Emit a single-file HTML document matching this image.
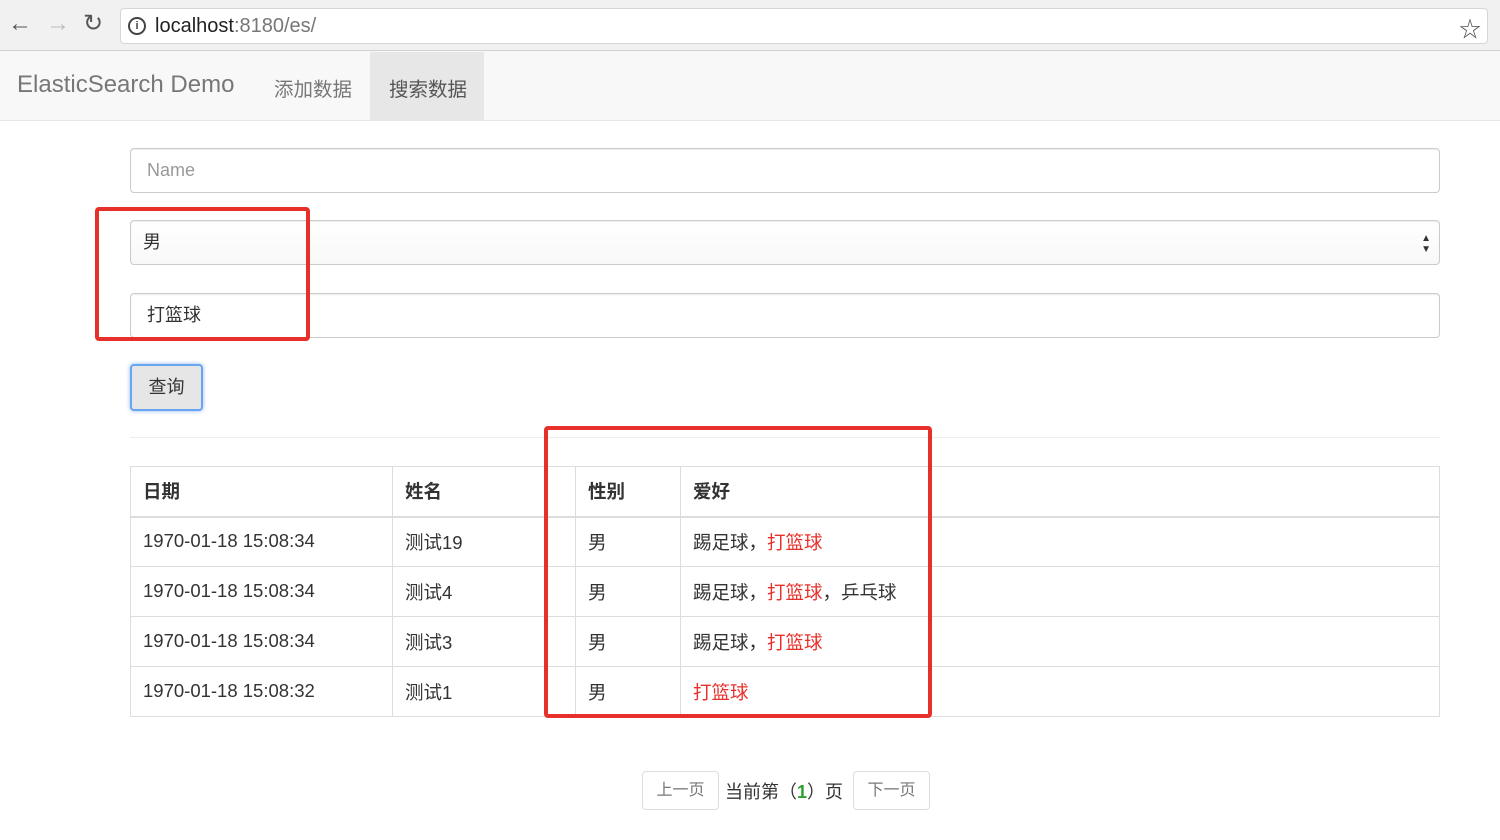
<!DOCTYPE html>
<html><head><meta charset="utf-8"><style>
*{box-sizing:border-box;margin:0;padding:0}
body{width:1500px;height:840px;overflow:hidden;background:#fff;font-family:"Liberation Sans","Noto Sans CJK SC",sans-serif;position:relative;color:#333}
.abs{position:absolute}
.chrome{left:0;top:0;width:1500px;height:51px;background:#f1f1f1;border-bottom:1px solid #d0d0d0}
.url{left:120px;top:8px;width:1368px;height:36px;background:#fff;border:1px solid #d6d6d6;border-radius:4px;font-size:20px;line-height:34px;padding-left:34px;color:#222}
.nav{left:0;top:51px;width:1500px;height:70px;background:#f8f8f8;border-bottom:1px solid #e7e7e7}
.inp{left:130px;width:1310px;height:45px;border:1px solid #ccc;border-radius:4px;font-size:18px;line-height:43px;padding-left:16px;box-shadow:inset 0 1px 1px rgba(0,0,0,.075)}
table{position:absolute;left:130px;top:466px;width:1310px;border-collapse:collapse;font-size:18.5px}
td,th{border:1px solid #ddd;height:50px;padding-left:12px;text-align:left;vertical-align:middle}
th{border-bottom:2px solid #ddd;font-weight:bold}
td:first-child{padding-top:0;position:relative;top:-1px}
.r{color:#e8302b}
.red{border:4px solid #e8302b;border-radius:4px}
.pb{top:771px;width:77px;height:39px;border:1px solid #ddd;border-radius:4px;font-size:16px;color:#777;text-align:center;line-height:37px}
</style></head><body>
<div class="abs" style="left:0;top:0;width:400px;height:2px;background:#ccc"></div>
<div class="abs chrome"></div>
<div class="abs" style="left:8px;top:10px;font-size:24px;color:#555">&#8592;</div>
<div class="abs" style="left:46px;top:10px;font-size:24px;color:#bbb">&#8594;</div>
<div class="abs" style="left:83px;top:9px;font-size:24px;color:#555">&#8635;</div>
<div class="abs url">localhost<span style="color:#777">:8180/es/</span></div>
<div class="abs" style="left:128px;top:17px;width:18px;height:18px;border:2px solid #444;border-radius:50%;font-size:11px;text-align:center;line-height:14px;font-weight:bold;color:#444">i</div>
<div class="abs" style="left:1459px;top:12px;font-size:22px;color:#555">☆</div>
<div class="abs nav"></div>
<div class="abs" style="left:370px;top:52px;width:114px;height:68px;background:#e7e7e7"></div>
<div class="abs" style="left:17px;top:71px;font-size:24px;color:#777">ElasticSearch Demo</div>
<div class="abs" style="left:274px;top:73px;font-size:19.5px;color:#777">添加数据</div>
<div class="abs" style="left:389px;top:73px;font-size:19.5px;color:#555">搜索数据</div>
<div class="abs inp" style="top:148px;color:#999">Name</div>
<div class="abs inp" style="top:220px;padding-left:12px;background:linear-gradient(#fff,#f8f8f8)">男<span style="position:absolute;right:8px;font-size:10px;line-height:11px;top:12px;color:#333">▲<br>▼</span></div>
<div class="abs inp" style="top:293px">打篮球</div>
<div class="abs" style="left:130px;top:364px;width:73px;height:47px;border:2px solid #6aa6ef;border-radius:4px;background:#e6e6e6;font-size:18px;text-align:center;line-height:43px;box-shadow:0 0 4px #8bb8f0">查询</div>
<div class="abs" style="left:130px;top:437px;width:1310px;height:1px;background:#eee"></div>
<table>
<tr><th style="width:262px">日期</th><th style="width:183px">姓名</th><th style="width:105px">性别</th><th>爱好</th></tr>
<tr><td>1970-01-18 15:08:34</td><td>测试19</td><td>男</td><td>踢足球，<span class="r">打篮球</span></td></tr>
<tr><td>1970-01-18 15:08:34</td><td>测试4</td><td>男</td><td>踢足球，<span class="r">打篮球</span>，乒乓球</td></tr>
<tr><td>1970-01-18 15:08:34</td><td>测试3</td><td>男</td><td>踢足球，<span class="r">打篮球</span></td></tr>
<tr><td>1970-01-18 15:08:32</td><td>测试1</td><td>男</td><td><span class="r">打篮球</span></td></tr>
</table>
<div class="abs red" style="left:95px;top:207px;width:215px;height:134px"></div>
<div class="abs red" style="left:544px;top:426px;width:388px;height:292px"></div>
<div class="abs pb" style="left:642px">上一页</div>
<div class="abs" style="left:725px;top:778px;font-size:18px;color:#333">当前第（<b style="color:#2ca02c">1</b>）页</div>
<div class="abs pb" style="left:853px">下一页</div>
</body></html>
